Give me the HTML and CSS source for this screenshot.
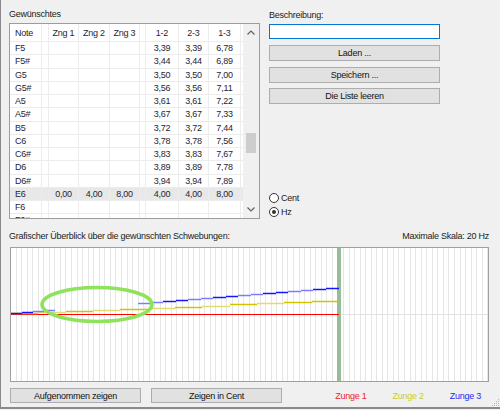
FILE: index.html
```html
<!DOCTYPE html>
<html lang="de">
<head>
<meta charset="utf-8">
<title>Schwebungen</title>
<link rel="stylesheet" href="styles.css">
</head>
<body>
<div class="window">
  <div class="top">
    <div class="left-col">
      <div class="caption">Gewünschtes</div>
      <div class="grid">
        <div class="grid-body">
          <table class="notes">
            <colgroup>
              <col class="c-note"><col class="c-gap"><col class="c-zng"><col class="c-zng2"><col class="c-zng"><col class="c-gap2"><col class="c-d1"><col class="c-d2"><col class="c-d3"><col class="c-fill">
            </colgroup>
            <thead>
              <tr><th class="note">Note</th><th></th><th>Zng 1</th><th>Zng 2</th><th>Zng 3</th><th></th><th>1-2</th><th>2-3</th><th>1-3</th><th class="fill"></th></tr>
            </thead>
            <tbody>
              <tr><td class="note">F5</td><td></td><td></td><td></td><td></td><td></td><td>3,39</td><td>3,39</td><td>6,78</td><td class="fill"></td></tr>
              <tr><td class="note">F5#</td><td></td><td></td><td></td><td></td><td></td><td>3,44</td><td>3,44</td><td>6,89</td><td class="fill"></td></tr>
              <tr><td class="note">G5</td><td></td><td></td><td></td><td></td><td></td><td>3,50</td><td>3,50</td><td>7,00</td><td class="fill"></td></tr>
              <tr><td class="note">G5#</td><td></td><td></td><td></td><td></td><td></td><td>3,56</td><td>3,56</td><td>7,11</td><td class="fill"></td></tr>
              <tr><td class="note">A5</td><td></td><td></td><td></td><td></td><td></td><td>3,61</td><td>3,61</td><td>7,22</td><td class="fill"></td></tr>
              <tr><td class="note">A5#</td><td></td><td></td><td></td><td></td><td></td><td>3,67</td><td>3,67</td><td>7,33</td><td class="fill"></td></tr>
              <tr><td class="note">B5</td><td></td><td></td><td></td><td></td><td></td><td>3,72</td><td>3,72</td><td>7,44</td><td class="fill"></td></tr>
              <tr><td class="note">C6</td><td></td><td></td><td></td><td></td><td></td><td>3,78</td><td>3,78</td><td>7,56</td><td class="fill"></td></tr>
              <tr><td class="note">C6#</td><td></td><td></td><td></td><td></td><td></td><td>3,83</td><td>3,83</td><td>7,67</td><td class="fill"></td></tr>
              <tr><td class="note">D6</td><td></td><td></td><td></td><td></td><td></td><td>3,89</td><td>3,89</td><td>7,78</td><td class="fill"></td></tr>
              <tr><td class="note">D6#</td><td></td><td></td><td></td><td></td><td></td><td>3,94</td><td>3,94</td><td>7,89</td><td class="fill"></td></tr>
              <tr class="selected"><td class="note">E6</td><td></td><td>0,00</td><td>4,00</td><td>8,00</td><td></td><td>4,00</td><td>4,00</td><td>8,00</td><td class="fill"></td></tr>
              <tr><td class="note">F6</td><td></td><td></td><td></td><td></td><td></td><td></td><td></td><td></td><td class="fill"></td></tr>
              <tr><td class="note">F6#</td><td></td><td></td><td></td><td></td><td></td><td></td><td></td><td></td><td class="fill"></td></tr>
            </tbody>
          </table>
        </div>
        <div class="vscroll">
          <div class="arrow"><svg width="8" height="5" viewBox="0 0 8 5"><path d="M0.5 4.5 L4 1 L7.5 4.5" fill="none" stroke="#606060" stroke-width="1.2"/></svg></div>
          <div class="track"><div class="thumb"></div></div>
          <div class="arrow"><svg width="8" height="5" viewBox="0 0 8 5"><path d="M0.5 0.5 L4 4 L7.5 0.5" fill="none" stroke="#606060" stroke-width="1.2"/></svg></div>
        </div>
      </div>
    </div>
    <div class="right-col">
      <div class="caption">Beschreibung:</div>
      <div class="textbox"></div>
      <div class="btn first">Laden ...</div>
      <div class="btn">Speichern ...</div>
      <div class="btn">Die Liste leeren</div>
      <div class="radios">
        <div class="radio"><span class="circle"></span>Cent</div>
        <div class="radio"><span class="circle checked"></span>Hz</div>
      </div>
    </div>
  </div>
  <div class="chart-head">
    <span>Grafischer Überblick über die gewünschten Schwebungen:</span>
    <span>Maximale Skala: 20 Hz</span>
  </div>
  <div class="chart">
    <svg class="plot" width="477" height="133" viewBox="0 0 477 133">
      <line x1="330" y1="66.5" x2="477" y2="66.5" stroke="#e2e2e2" stroke-width="1"/>
      <rect x="326" y="0" width="4" height="133" fill="#98bb98"/>
      <line x1="0" y1="66.5" x2="328" y2="66.5" stroke="#ff0000" stroke-width="1.2"/>
      <g stroke-width="1.5">
        <line x1="0" y1="65.5" x2="27" y2="65.5" stroke="#cfc500"/>
        <line x1="27" y1="64.5" x2="55" y2="64.5" stroke="#e0dc70"/>
        <line x1="55" y1="63.5" x2="82" y2="63.5" stroke="#cfc500"/>
        <line x1="82" y1="62.5" x2="109" y2="62.5" stroke="#e0dc70"/>
        <line x1="109" y1="61.5" x2="137" y2="61.5" stroke="#cfc500"/>
        <line x1="137" y1="60.5" x2="164" y2="60.5" stroke="#e0dc70"/>
        <line x1="164" y1="59.5" x2="191" y2="59.5" stroke="#cfc500"/>
        <line x1="191" y1="58.5" x2="219" y2="58.5" stroke="#e0dc70"/>
        <line x1="219" y1="56.5" x2="246" y2="56.5" stroke="#cfc500"/>
        <line x1="246" y1="55.5" x2="273" y2="55.5" stroke="#e0dc70"/>
        <line x1="273" y1="54.5" x2="301" y2="54.5" stroke="#cfc500"/>
        <line x1="301" y1="53.5" x2="328" y2="53.5" stroke="#cfc500"/>
      </g>
      <g stroke-width="1.5">
        <line x1="0" y1="65.5" x2="11" y2="65.5" stroke="#1414ff"/>
        <line x1="11" y1="64.5" x2="22" y2="64.5" stroke="#1414ff"/>
        <line x1="22" y1="63.5" x2="33" y2="63.5" stroke="#7c7cff"/>
        <line x1="33" y1="62.5" x2="44" y2="62.5" stroke="#7c7cff"/>
        <line x1="127" y1="55.5" x2="140" y2="55.5" stroke="#7c7cff"/>
        <line x1="140" y1="54.5" x2="152" y2="54.5" stroke="#7c7cff"/>
        <line x1="152" y1="53.5" x2="165" y2="53.5" stroke="#1414ff"/>
        <line x1="165" y1="52.5" x2="177" y2="52.5" stroke="#1414ff"/>
        <line x1="177" y1="51.5" x2="190" y2="51.5" stroke="#7c7cff"/>
        <line x1="190" y1="50.5" x2="202" y2="50.5" stroke="#7c7cff"/>
        <line x1="202" y1="49.5" x2="215" y2="49.5" stroke="#1414ff"/>
        <line x1="215" y1="48.5" x2="227" y2="48.5" stroke="#1414ff"/>
        <line x1="227" y1="47.5" x2="240" y2="47.5" stroke="#7c7cff"/>
        <line x1="240" y1="46.5" x2="252" y2="46.5" stroke="#7c7cff"/>
        <line x1="252" y1="45.5" x2="265" y2="45.5" stroke="#1414ff"/>
        <line x1="265" y1="44.5" x2="277" y2="44.5" stroke="#1414ff"/>
        <line x1="277" y1="43.5" x2="290" y2="43.5" stroke="#7c7cff"/>
        <line x1="290" y1="42.5" x2="302" y2="42.5" stroke="#7c7cff"/>
        <line x1="302" y1="41.5" x2="315" y2="41.5" stroke="#1414ff"/>
        <line x1="315" y1="40.5" x2="328" y2="40.5" stroke="#1414ff"/>
      </g>
      <ellipse cx="86" cy="56.5" rx="55" ry="17" fill="none" stroke="#8fe35c" stroke-width="3.5"/>
    </svg>
  </div>
  <div class="bottom">
    <div class="btn wide">Aufgenommen zeigen</div>
    <div class="btn wide second">Zeigen in Cent</div>
    <div class="legend">
      <span class="z1">Zunge 1</span>
      <span class="z2">Zunge 2</span>
      <span class="z3">Zunge 3</span>
    </div>
  </div>
  <svg class="grip" width="10" height="10" viewBox="0 0 10 10">
    <g fill="#b8b8b8">
      <rect x="8" y="2" width="1" height="1"/>
      <rect x="6" y="4" width="1" height="1"/><rect x="8" y="4" width="1" height="1"/>
      <rect x="4" y="6" width="1" height="1"/><rect x="6" y="6" width="1" height="1"/><rect x="8" y="6" width="1" height="1"/>
      <rect x="2" y="8" width="1" height="1"/><rect x="4" y="8" width="1" height="1"/><rect x="6" y="8" width="1" height="1"/><rect x="8" y="8" width="1" height="1"/>
    </g>
  </svg>
</div>
</body>
</html>
```
FILE: styles.css
```css
html, body {
  margin: 0;
  padding: 0;
  background: #f0f0f0;
}

.window {
  position: relative;
  width: 500px;
  height: 409px;
  box-sizing: border-box;
  border-left: 1px solid #8a8a8a;
  border-bottom: 2px solid #8a8a8a;
  padding: 0 11px 0 8px;
  display: flex;
  flex-direction: column;
  font-family: "Liberation Sans", Arial, sans-serif;
  font-size: 9px;
  letter-spacing: -0.25px;
  color: #222;
  overflow: hidden;
}

.top {
  display: flex;
  height: 219px;
}

.left-col {
  width: 251px;
  padding-top: 7px;
  box-sizing: border-box;
  display: flex;
  flex-direction: column;
}

.caption {
  height: 14px;
  line-height: 14px;
  margin-bottom: 2px;
  color: #222;
}

.grid {
  height: 196px;
  box-sizing: border-box;
  border: 1px solid #9c9c9c;
  background: #fff;
  display: flex;
}

.grid-body {
  width: 233px;
  overflow: hidden;
}

.notes {
  table-layout: fixed;
  width: 233px;
  border-collapse: separate;
  border-spacing: 0;
  color: #262636;
}

.c-note { width: 32px; }
.c-gap { width: 7px; }
.c-zng { width: 30px; }
.c-zng2 { width: 31px; }
.c-gap2 { width: 6px; }
.c-d1 { width: 33px; }
.c-d2 { width: 30px; }
.c-d3 { width: 32px; }
.c-fill { width: 2px; }

.notes th,
.notes td {
  padding: 0;
  box-sizing: border-box;
  border-right: 1px solid #ececec;
  border-bottom: 1px solid #ececec;
  text-align: center;
  font-weight: normal;
  white-space: nowrap;
  overflow: hidden;
}

.notes thead tr {
  height: 18px;
}

.notes tbody tr {
  height: 13.25px;
}

.notes .note {
  text-align: left;
  padding-left: 5px;
}

.notes .fill {
  border-right: none;
}

.notes tr.selected td {
  background: #e8e8e8;
}

.vscroll {
  width: 16px;
  background: #f0f0f0;
  display: flex;
  flex-direction: column;
}

.arrow {
  height: 17px;
  display: flex;
  align-items: center;
  justify-content: center;
}

.track {
  flex: 1;
  padding-top: 92px;
  box-sizing: border-box;
  display: flex;
  justify-content: center;
}

.thumb {
  width: 10px;
  height: 20px;
  background: #cdcdcd;
}

.right-col {
  width: 171px;
  margin-left: 9px;
  padding-top: 8px;
  box-sizing: border-box;
  display: flex;
  flex-direction: column;
}

.right-col .caption {
  margin-bottom: 2px;
}

.textbox {
  height: 15px;
  box-sizing: border-box;
  border: 1px solid #0078d7;
  background: #fff;
}

.btn {
  height: 16px;
  box-sizing: border-box;
  border: 1px solid #adadad;
  background: #e1e1e1;
  display: flex;
  align-items: center;
  justify-content: center;
  margin-top: 5.5px;
  color: #111;
}

.btn.first {
  margin-top: 6px;
}

.radios {
  margin-top: auto;
  display: flex;
  flex-direction: column;
}

.radio {
  height: 14px;
  display: flex;
  align-items: center;
  gap: 2px;
}

.circle {
  width: 10px;
  height: 10px;
  box-sizing: border-box;
  border: 1px solid #333;
  border-radius: 50%;
  background: #fff;
  display: flex;
  align-items: center;
  justify-content: center;
}

.circle.checked::after {
  content: "";
  width: 4px;
  height: 4px;
  border-radius: 50%;
  background: #333;
}

.chart-head {
  margin-top: 10px;
  height: 14px;
  line-height: 14px;
  display: flex;
  justify-content: space-between;
  color: #222;
}

.chart {
  margin-top: 4px;
  margin-left: 1px;
  width: 479px;
  height: 135px;
  box-sizing: border-box;
  border: 1px solid #a0a0a0;
  background-color: #fff;
  background-image: repeating-linear-gradient(to right, transparent 0, transparent 4.5px, #e6e6e6 4.5px, #e6e6e6 5.55px);
}

.plot {
  display: block;
}

.bottom {
  margin-top: 6px;
  display: flex;
  align-items: center;
}

.btn.wide {
  width: 131px;
  height: 15px;
  margin-top: 0;
  margin-left: 1px;
}

.btn.wide.second {
  margin-left: 10px;
}

.legend {
  margin-left: auto;
  padding-right: 8px;
  display: flex;
  gap: 26px;
}

.z1 { color: #f0202a; }
.z2 { color: #cccc2a; }
.z3 { color: #2a2af5; }

.grip {
  position: absolute;
  right: 0;
  bottom: 0;
}
```
